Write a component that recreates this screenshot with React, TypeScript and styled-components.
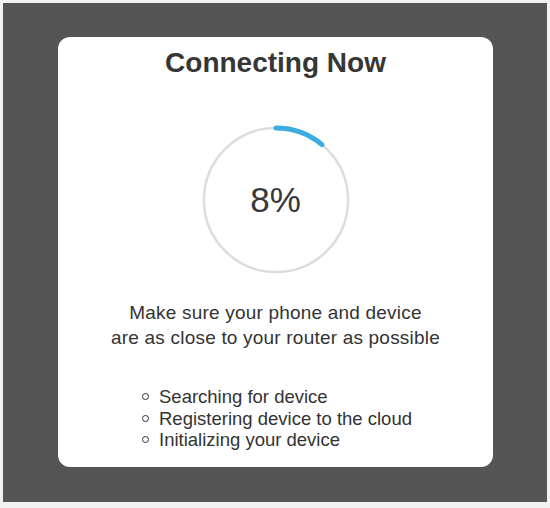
import styled, { createGlobalStyle } from 'styled-components'

const GlobalStyle = createGlobalStyle`
  html, body {
    margin: 0;
    padding: 0;
    background: #f2f2f2;
    font-family: "Liberation Sans", Arial, sans-serif;
  }
`

const Frame = styled.div`
  box-sizing: border-box;
  margin: 3px;
  width: 544px;
  height: 499px;
  background: #555555;
  padding: 34px 0 0 55px;
`

const Card = styled.div`
  box-sizing: border-box;
  width: 435px;
  height: 430px;
  background: #ffffff;
  border-radius: 12px;
  padding-top: 10px;
  display: flex;
  flex-direction: column;
  align-items: center;
  color: #333333;
`

const Title = styled.h1`
  margin: 0;
  font-size: 28px;
  line-height: 32px;
  font-weight: 700;
  color: #363636;
`

const RingWrap = styled.div`
  position: relative;
  width: 150px;
  height: 150px;
  margin-top: 46px;
`

const Percent = styled.div`
  position: absolute;
  inset: 0;
  display: flex;
  align-items: center;
  justify-content: center;
  font-size: 35px;
  font-weight: 400;
  color: #383838;
`

const Hint = styled.p`
  margin: 25px 0 0;
  font-size: 19px;
  letter-spacing: 0.2px;
  line-height: 25px;
  text-align: center;
  color: #333333;
`

const Steps = styled.ul`
  list-style: none;
  margin: 36px 0 0;
  padding: 0;
  align-self: flex-start;
  margin-left: 84px;
`

const Step = styled.li`
  display: flex;
  align-items: center;
  gap: 10px;
  font-size: 18.5px;
  line-height: 21.5px;
  color: #333333;
`

const Dot = styled.span`
  box-sizing: border-box;
  width: 7px;
  height: 7px;
  border: 1.4px solid #333333;
  border-radius: 50%;
  flex-shrink: 0;
`

const progress = 8

// the arc in the design is drawn a bit longer than the raw value
function Ring({ value }: { value: number }) {
  const r = 72
  const c = 2 * Math.PI * r
  const arc = Math.max(value, 11) / 100 * c
  return (
    <svg width="150" height="150" viewBox="0 0 150 150">
      <circle cx="75" cy="75" r={r} fill="none" stroke="#dddddd" strokeWidth="2.5" />
      <circle
        cx="75"
        cy="75"
        r={r}
        fill="none"
        stroke="#3aace0"
        strokeWidth="5"
        strokeLinecap="round"
        strokeDasharray={`${arc} ${c}`}
        transform="rotate(-90 75 75)"
      />
    </svg>
  )
}

export default function App() {
  return (
    <>
      <GlobalStyle />
      <Frame>
        <Card>
          <Title>Connecting Now</Title>
          <RingWrap>
            <Ring value={progress} />
            <Percent>{progress}%</Percent>
          </RingWrap>
          <Hint>
            Make sure your phone and device
            <br />
            are as close to your router as possible
          </Hint>
          <Steps>
            <Step><Dot />Searching for device</Step>
            <Step><Dot />Registering device to the cloud</Step>
            <Step><Dot />Initializing your device</Step>
          </Steps>
        </Card>
      </Frame>
    </>
  )
}
